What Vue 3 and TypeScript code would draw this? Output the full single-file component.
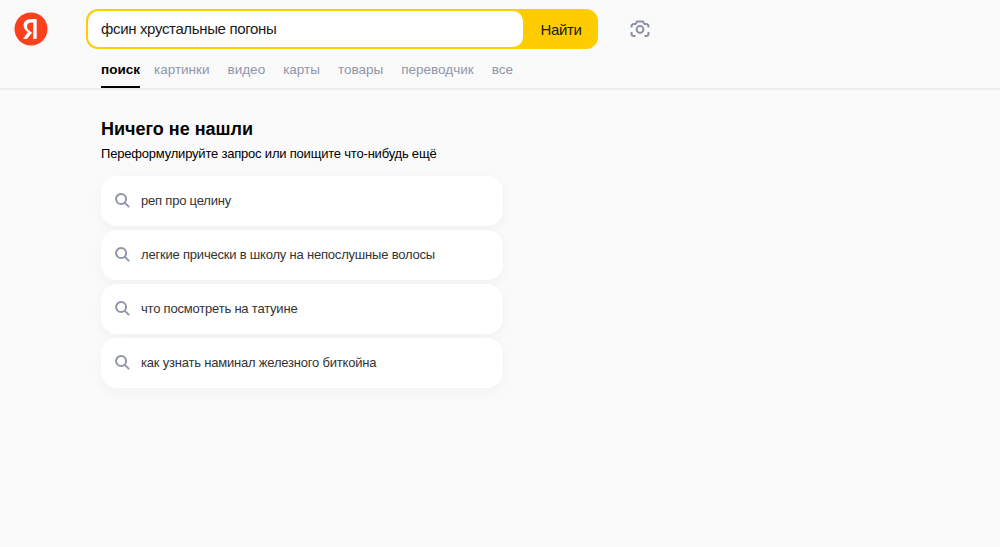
<template>
  <div class="page">
    <header class="header">
      <div class="top">
        <svg class="logo" width="34" height="34" viewBox="0 0 34 34">
          <circle cx="17" cy="17" r="16.5" fill="#fc3f1d" />
          <path d="M19.2 27V10.6h-1.7c-3 0-4.5 1.500-4.5 3.700 0 2.500 1.100 3.700 3.300 5.200l1.800 1.200L12.900 27H9.100l4.700-7c-2.700-1.900-4.200-3.800-4.200-6.900C9.600 9.800 12.400 7 17.500 7h5.200v20z" fill="#fff" />
        </svg>
        <form class="search" @submit.prevent>
          <div class="field">{{ query }}</div>
          <button class="find" type="button">Найти</button>
        </form>
        <svg class="camera" width="22" height="22" viewBox="0 0 22 22" fill="none" stroke="#8b90a5" stroke-width="2">
          <circle cx="11" cy="11.500" r="3.400" />
          <path d="M2.500 9.500V8.500c0-1.400 1-2.500 2.400-2.500h1.600l1.600-2.500h5.800L15.500 6h1.600c1.400 0 2.400 1.100 2.400 2.500v1" />
          <path d="M2.500 14v1.500c0 1.500 1 2.500 2.500 2.500h1.500M15.500 18H17c1.500 0 2.500-1 2.500-2.500V14" />
        </svg>
      </div>
      <nav class="tabs">
        <a v-for="(tab, i) in tabs" :key="tab" class="tab" :class="{ active: i === 0 }">{{ tab }}</a>
      </nav>
    </header>
    <main class="content">
      <h1 class="title">Ничего не нашли</h1>
      <p class="hint">Переформулируйте запрос или поищите что-нибудь ещё</p>
      <ul class="list">
        <li v-for="item in suggestions" :key="item" class="card">
          <svg class="loupe" width="15" height="15" viewBox="0 0 18 18" fill="none" stroke="#8f96ab" stroke-width="2.400">
            <circle cx="7.300" cy="7.300" r="6" />
            <path d="M11.500 11.500L17 17" />
          </svg>
          <span>{{ item }}</span>
        </li>
      </ul>
    </main>
  </div>
</template>

<script setup lang="ts">
const query = 'фсин хрустальные погоны';

const tabs: string[] = ['поиск', 'картинки', 'видео', 'карты', 'товары', 'переводчик', 'все'];

const suggestions: string[] = [
  'реп про целину',
  'легкие прически в школу на непослушные волосы',
  'что посмотреть на татуине',
  'как узнать наминал железного биткойна',
];
</script>

<style>
html,
body {
  margin: 0;
  background: #fafafb;
}
</style>

<style scoped>
.page {
  height: 547px;
  overflow: hidden;
  background: #fafafb;
  font-family: "Liberation Sans", Arial, sans-serif;
  color: #1a1a1a;
}

.header {
  height: 88px;
  border-bottom: 2px solid #ebecef;
}

.top {
  display: flex;
  align-items: center;
  height: 40px;
  padding: 9px 0 0 14px;
}

.logo {
  flex: none;
  margin-right: 38px;
}

.search {
  display: flex;
  width: 512px;
  height: 40px;
  box-sizing: border-box;
  background: #fc0;
  border-radius: 12px;
}

.field {
  width: 435px;
  margin: 2px 0 2px 2px;
  padding-left: 13px;
  box-sizing: border-box;
  background: #fff;
  border-radius: 10px;
  font-size: 15px;
  letter-spacing: -0.35px;
  line-height: 36px;
}

.find {
  flex: 1;
  padding: 0 0 0 1px;
  border: 0;
  background: none;
  font: inherit;
  font-size: 15px;
  letter-spacing: -0.35px;
  color: #1a1a1a;
}

.camera {
  margin-left: 31px;
}

.tabs {
  display: flex;
  gap: 18px;
  margin-top: 9px;
  padding-left: 101px;
}

.tab {
  height: 30px;
  box-sizing: border-box;
  padding-top: 4px;
  font-size: 13.500px;
  line-height: 16px;
  color: #8f96ab;
}

.tab.active {
  margin-right: -4px;
  font-weight: 700;
  color: #000;
  border-bottom: 2px solid #000;
}

.content {
  padding: 28px 0 0 101px;
}

.title {
  margin: 0;
  font-size: 18px;
  line-height: 22px;
  font-weight: 700;
  color: #000;
}

.hint {
  margin: 5px 0 0;
  font-size: 13px;
  letter-spacing: -0.2px;
  line-height: 18px;
  color: #000;
}

.list {
  display: flex;
  flex-direction: column;
  gap: 4px;
  width: 402px;
  margin: 13px 0 0;
  padding: 0;
  list-style: none;
}

.card {
  display: flex;
  align-items: center;
  gap: 11px;
  height: 50px;
  box-sizing: border-box;
  padding: 0 0 2px 14px;
  background: #fff;
  border-radius: 16px;
  box-shadow: 0 4px 12px rgba(30, 40, 70, 0.04);
  font-size: 13px;
  letter-spacing: -0.2px;
  color: #333;
}
</style>
